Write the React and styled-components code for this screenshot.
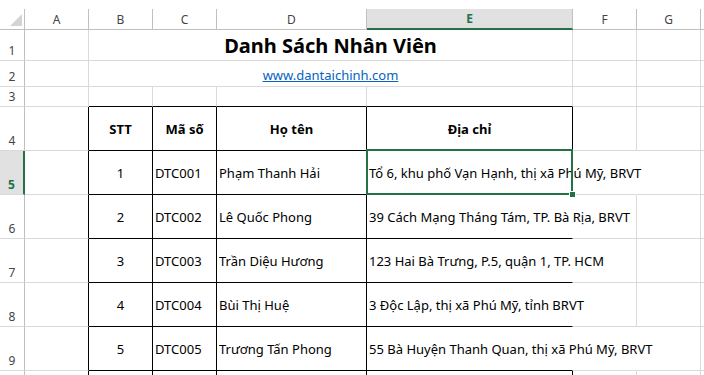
import React from "react";
import styled, { createGlobalStyle } from "styled-components";

const GREEN = "#217346";
const GRID = "#d9d9d9";
const HEAD_LINE = "#c0c0c0";

const people = [
	{ stt: "1", code: "DTC001", name: "Phạm Thanh Hải", address: "Tổ 6, khu phố Vạn Hạnh, thị xã Phú Mỹ, BRVT", long: true },
	{ stt: "2", code: "DTC002", name: "Lê Quốc Phong", address: "39 Cách Mạng Tháng Tám, TP. Bà Rịa, BRVT" },
	{ stt: "3", code: "DTC003", name: "Trần Diệu Hương", address: "123 Hai Bà Trưng, P.5, quận 1, TP. HCM" },
	{ stt: "4", code: "DTC004", name: "Bùi Thị Huệ", address: "3 Độc Lập, thị xã Phú Mỹ, tỉnh BRVT" },
	{ stt: "5", code: "DTC005", name: "Trương Tấn Phong", address: "55 Bà Huyện Thanh Quan, thị xã Phú Mỹ, BRVT", long: true },
];

const columns = ["A", "B", "C", "D", "E", "F", "G", ""];

const line = (kind) => (kind === "black" ? "#000" : kind === "none" ? "transparent" : GRID);

function App() {
	return (
		<>
			<GlobalStyle />
			<Sheet>
				<Corner>
					<svg width="12" height="12" viewBox="0 0 12 12">
						<polygon points="12,0 12,12 0,12" fill="#d4d4d4" />
					</svg>
				</Corner>
				{columns.map((c) => (
					<ColHead key={c || "H"} $active={c === "E"}>
						{c}
					</ColHead>
				))}

				{/* row 1 - title */}
				<RowHead>1</RowHead>
				<Cell />
				<Merged>
					<Title>Danh Sách Nhân Viên</Title>
				</Merged>
				<Cell />
				<Cell />
				<Cell $r="none" />

				{/* row 2 - link */}
				<RowHead>2</RowHead>
				<Cell />
				<Merged>
					<Link>www.dantaichinh.com</Link>
				</Merged>
				<Cell />
				<Cell />
				<Cell $r="none" />

				{/* row 3 */}
				<RowHead>3</RowHead>
				<Cell />
				<Cell $b="black" />
				<Cell $b="black" />
				<Cell $b="black" />
				<Cell $b="black" />
				<Cell />
				<Cell />
				<Cell $r="none" />

				{/* row 4 - table header */}
				<RowHead>4</RowHead>
				<Cell $r="black" />
				{["STT", "Mã số", "Họ tên", "Địa chỉ"].map((h) => (
					<Cell key={h} $r="black" $b="black" $center $bold>
						{h}
					</Cell>
				))}
				<Cell />
				<Cell />
				<Cell $r="none" />

				{people.map((p, i) => (
					<React.Fragment key={p.code}>
						<RowHead $active={i === 0}>{i + 5}</RowHead>
						<Cell $r="black" />
						<Cell $r="black" $b="black" $center>
							{p.stt}
						</Cell>
						<Cell $r="black" $b="black">
							{p.code}
						</Cell>
						<Cell $r="black" $b="black">
							{p.name}
						</Cell>
						<Cell $r="none" $b="black" $spill>
							{p.address}
							{i === 0 && (
								<Selection>
									<FillHandle />
								</Selection>
							)}
						</Cell>
						<Cell $r={p.long ? "none" : "grid"} />
						<Cell />
						<Cell $r="none" />
					</React.Fragment>
				))}

				{/* row 10, only its top edge shows */}
				<RowHead />
				<Cell $r="black" />
				<Cell $r="black" />
				<Cell $r="black" />
				<Cell $r="black" />
				<Cell $r="black" />
				<Cell />
				<Cell />
				<Cell $r="none" />
			</Sheet>
		</>
	);
}

export default App;

const GlobalStyle = createGlobalStyle`
	html, body {
		margin: 0;
		padding: 0;
		background: #fff;
		overflow: hidden;
	}
	body {
		font-family: "Noto Sans", "Liberation Sans", sans-serif;
		color: #000;
	}
`;

const Sheet = styled.div`
	display: grid;
	grid-template-columns: 25px 64px 64px 64px 150px 206px 64px 64px 1fr;
	grid-template-rows: 30px 31px 26px 20px repeat(7, 44px);
	width: 704px;
	height: 375px;
	overflow: hidden;
`;

const Corner = styled.div`
	box-sizing: border-box;
	margin-top: 9px;
	border-right: 1px solid ${HEAD_LINE};
	border-bottom: 1px solid ${HEAD_LINE};
	display: flex;
	align-items: flex-end;
	justify-content: flex-end;
	padding: 0 2px 3px 0;
`;

const ColHead = styled.div`
	box-sizing: border-box;
	margin-top: 9px;
	display: flex;
	align-items: center;
	justify-content: center;
	font-size: 12px;
	color: ${(p) => (p.$active ? GREEN : "#444")};
	font-weight: ${(p) => (p.$active ? 700 : 400)};
	background: ${(p) => (p.$active ? "#e1e1e1" : "#fff")};
	border-right: 1px solid ${HEAD_LINE};
	border-bottom: ${(p) => (p.$active ? `2px solid ${GREEN}` : `1px solid ${HEAD_LINE}`)};
`;

const RowHead = styled.div`
	box-sizing: border-box;
	display: flex;
	align-items: flex-end;
	justify-content: center;
	padding-bottom: 1px;
	font-size: 12px;
	line-height: 16px;
	color: ${(p) => (p.$active ? GREEN : "#444")};
	font-weight: ${(p) => (p.$active ? 700 : 400)};
	background: ${(p) => (p.$active ? "#e1e1e1" : "#fff")};
	border-right: ${(p) => (p.$active ? `2px solid ${GREEN}` : `1px solid ${HEAD_LINE}`)};
	border-bottom: 1px solid ${GRID};
`;

const Cell = styled.div`
	box-sizing: border-box;
	position: relative;
	z-index: ${(p) => (p.$spill ? 1 : "auto")};
	min-width: 0;
	display: flex;
	align-items: center;
	justify-content: ${(p) => (p.$center ? "center" : "flex-start")};
	padding: 0 2px;
	font-size: 13px;
	font-weight: ${(p) => (p.$bold ? 700 : 400)};
	white-space: nowrap;
	overflow: ${(p) => (p.$spill ? "visible" : "hidden")};
	border-right: 1px solid ${(p) => line(p.$r)};
	border-bottom: 1px solid ${(p) => line(p.$b)};
`;

const Merged = styled.div`
	box-sizing: border-box;
	grid-column: span 4;
	display: flex;
	align-items: flex-end;
	justify-content: center;
	border-right: 1px solid ${GRID};
	border-bottom: 1px solid ${GRID};
`;

const Title = styled.span`
	font-size: 20px;
	font-weight: 700;
	line-height: 24px;
	padding-bottom: 2px;
`;

const Link = styled.span`
	font-size: 13px;
	line-height: 18px;
	color: #0563c1;
	text-decoration: underline;
	padding-bottom: 2px;
`;

const Selection = styled.span`
	position: absolute;
	top: -2px;
	left: -1px;
	right: -1px;
	bottom: -1px;
	border: 2px solid ${GREEN};
	pointer-events: none;
`;

const FillHandle = styled.span`
	position: absolute;
	right: -5px;
	bottom: -5px;
	width: 5px;
	height: 5px;
	background: ${GREEN};
	border: 1px solid #fff;
`;
